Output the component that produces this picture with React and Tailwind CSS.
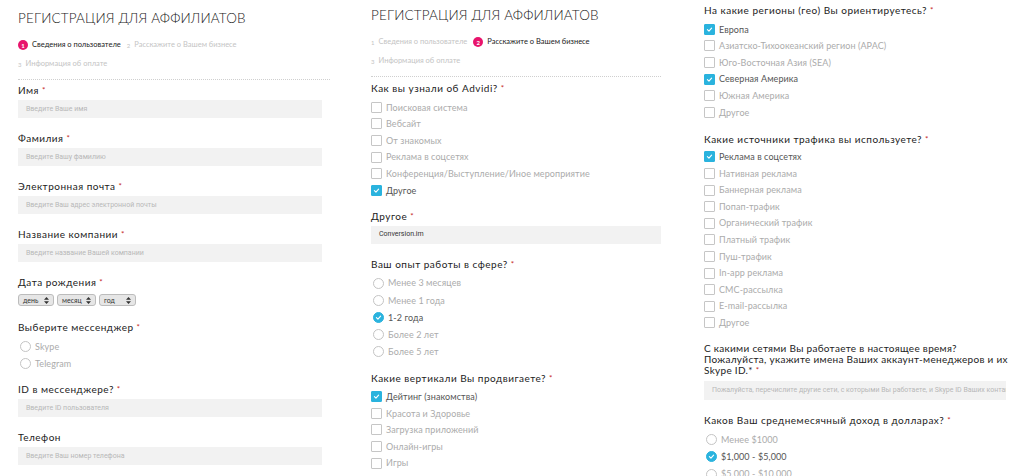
import React from 'react';

const font = { fontFamily: 'Lato, "Open Sans", sans-serif' };

const Req = () => <span className="text-[#c62828] text-[8px] align-top ml-[3px]">*</span>;

const Label = ({ children, className = '' }) => (
  <div className={`text-[10px] leading-[10px] h-[10px] whitespace-nowrap tracking-[0.05em] text-[#222] font-normal ${className}`}>
    {children}
    <Req />
  </div>
);

const Field = ({ placeholder, value, className = '' }) => (
  <div className={`h-[18px] bg-[#f2f2f2] flex items-center px-[8px] overflow-hidden whitespace-nowrap text-[7px] font-['Roboto'] ${value ? 'text-[#333]' : 'text-[#b8b8b8]'} ${className}`}>
    {value || placeholder}
  </div>
);

const Tick = () => (
  <svg width="7" height="7" viewBox="0 0 10 10" fill="none">
    <path d="M2 5.2 L4.2 7.3 L8 3" stroke="white" strokeWidth="1.6" strokeLinecap="round" strokeLinejoin="round" />
  </svg>
);

const CheckItem = ({ label, checked }) => (
  <div className="flex items-center h-[16.6px]">
    <span
      className={`w-[11px] h-[11px] rounded-[1px] border flex items-center justify-center shrink-0 ${
        checked ? 'bg-[#2ab3de] border-[#2ab3de]' : 'bg-white border-[#c6c6c6]'
      }`}
    >
      {checked && <Tick />}
    </span>
    <span className={`ml-[4px] text-[9px] tracking-[0.01em] whitespace-nowrap ${checked ? 'text-[#555]' : 'text-[#ababab]'}`}>{label}</span>
  </div>
);

const RadioItem = ({ label, checked }) => (
  <div className="flex items-center h-[17.2px] pl-[2px]">
    <span
      className={`w-[11px] h-[11px] rounded-full border flex items-center justify-center shrink-0 ${
        checked ? 'bg-[#2ab3de] border-[#2ab3de]' : 'bg-white border-[#c4c4c4]'
      }`}
    >
      {checked && <Tick />}
    </span>
    <span className={`ml-[4px] text-[9px] tracking-[0.01em] whitespace-nowrap ${checked ? 'text-[#555]' : 'text-[#ababab]'}`}>{label}</span>
  </div>
);

const Steps = ({ active }) => {
  const steps = ['Сведения о пользователе', 'Расскажите о Вашем бизнесе', 'Информация об оплате'];
  const item = (i) => {
    const on = active === i;
    return (
      <div key={i} className="flex items-center whitespace-nowrap">
        {on ? (
          <span className="w-[10px] h-[10px] rounded-full bg-[#e8146c] text-white text-[6px] font-bold flex items-center justify-center">{i + 1}</span>
        ) : (
          <span className="text-[6px] text-[#c4c4c4]">{i + 1}</span>
        )}
        <span className={`ml-[4px] text-[7.5px] ${on ? 'text-[#222]' : 'text-[#c4c4c4]'}`}>{steps[i]}</span>
      </div>
    );
  };
  return (
    <div>
      <div className="flex items-center gap-[6px] h-[14px]">
        {item(0)}
        {item(1)}
      </div>
      <div className="flex items-center h-[14px] mt-[5px]">{item(2)}</div>
    </div>
  );
};

const Title = () => (
  <h1 className="text-[13.5px] leading-[16px] tracking-[0.01em] text-[#222] font-light whitespace-nowrap">РЕГИСТРАЦИЯ ДЛЯ АФФИЛИАТОВ</h1>
);

const Arrows = () => (
  <svg width="5" height="7" viewBox="0 0 5 7" className="ml-auto">
    <path d="M2.5 0 L5 2.8 H0 Z M2.5 7 L5 4.2 H0 Z" fill="#333" />
  </svg>
);

const Select = ({ label, w }) => (
  <div className={`h-[12px] ${w} bg-[#e6e6e6] border border-[#bcbcbc] rounded-[3px] flex items-center px-[4px] text-[7px] text-[#333]`}>
    {label}
    <Arrows />
  </div>
);

export default function App() {
  return (
    <div className="w-[1020px] h-[476px] bg-white overflow-hidden flex" style={font}>
      {/* step 1 */}
      <div className="ml-[18px] w-[312px] pt-[10px]">
        <Title />
        <div className="mt-[12px]">
          <Steps active={0} />
        </div>
        <div className="border-t border-dotted border-[#cfcfcf] mt-[8px]" />
        <div className="mt-[5px] w-[304px]">
          <Label>Имя</Label>
          <Field className="mt-[5px]" placeholder="Введите Ваше имя" />
          <Label className="mt-[15px]">Фамилия</Label>
          <Field className="mt-[5px]" placeholder="Введите Вашу фамилию" />
          <Label className="mt-[15px]">Электронная почта</Label>
          <Field className="mt-[5px]" placeholder="Введите Ваш адрес электронной почты" />
          <Label className="mt-[15px]">Название компании</Label>
          <Field className="mt-[5px]" placeholder="Введите название Вашей компании" />
          <Label className="mt-[15px]">Дата рождения</Label>
          <div className="flex gap-[3px] mt-[7px]">
            <Select label="день" w="w-[36px]" />
            <Select label="месяц" w="w-[39px]" />
            <Select label="год" w="w-[37px]" />
          </div>
          <Label className="mt-[16px]">Выберите мессенджер</Label>
          <div className="mt-[6px]">
            <RadioItem label="Skype" />
            <RadioItem label="Telegram" />
          </div>
          <Label className="mt-[12px]">ID в мессенджере?</Label>
          <Field className="mt-[5px]" placeholder="Введите ID пользователя" />
          <div className="mt-[15px] text-[10px] leading-[10px] tracking-[0.05em] text-[#222]">Телефон</div>
          <Field className="mt-[5px]" placeholder="Введите Ваш номер телефона" />
        </div>
      </div>

      {/* step 2 */}
      <div className="ml-[41px] w-[290px] pt-[7px]">
        <Title />
        <div className="mt-[12px]">
          <Steps active={1} />
        </div>
        <div className="border-t border-dotted border-[#cfcfcf] mt-[8px]" />
        <div className="mt-[6px]">
          <Label>Как вы узнали об Advidi?</Label>
          <div className="mt-[6px]">
            <CheckItem label="Поисковая система" />
            <CheckItem label="Вебсайт" />
            <CheckItem label="От знакомых" />
            <CheckItem label="Реклама в соцсетях" />
            <CheckItem label="Конференция/Выступление/Иное мероприятие" />
            <CheckItem label="Другое" checked />
          </div>
          <Label className="mt-[12px]">Другое</Label>
          <Field className="mt-[5px]" value="Conversion.im" />
          <Label className="mt-[15px]">Ваш опыт работы в сфере?</Label>
          <div className="mt-[6px]">
            <RadioItem label="Менее 3 месяцев" />
            <RadioItem label="Менее 1 года" />
            <RadioItem label="1-2 года" checked />
            <RadioItem label="Более 2 лет" />
            <RadioItem label="Более 5 лет" />
          </div>
          <Label className="mt-[12px]">Какие вертикали Вы продвигаете?</Label>
          <div className="mt-[6px]">
            <CheckItem label="Дейтинг (знакомства)" checked />
            <CheckItem label="Красота и Здоровье" />
            <CheckItem label="Загрузка приложений" />
            <CheckItem label="Онлайн-игры" />
            <CheckItem label="Игры" />
          </div>
        </div>
      </div>

      {/* step 2, continued */}
      <div className="ml-[43px] w-[302px] pt-[5px]">
        <Label>На какие регионы (гео) Вы ориентируетесь?</Label>
        <div className="mt-[6px]">
          <CheckItem label="Европа" checked />
          <CheckItem label="Азиатско-Тихоокеанский регион (APAC)" />
          <CheckItem label="Юго-Восточная Азия (SEA)" />
          <CheckItem label="Северная Америка" checked />
          <CheckItem label="Южная Америка" />
          <CheckItem label="Другое" />
        </div>
        <Label className="mt-[13px]">Какие источники трафика вы используете?</Label>
        <div className="mt-[5px]">
          <CheckItem label="Реклама в соцсетях" checked />
          <CheckItem label="Нативная реклама" />
          <CheckItem label="Баннерная реклама" />
          <CheckItem label="Попап-трафик" />
          <CheckItem label="Органический трафик" />
          <CheckItem label="Платный трафик" />
          <CheckItem label="Пуш-трафик" />
          <CheckItem label="In-app реклама" />
          <CheckItem label="СМС-рассылка" />
          <CheckItem label="E-mail-рассылка" />
          <CheckItem label="Другое" />
        </div>
        <div className="mt-[12px] text-[10px] leading-[11px] tracking-[0.03em] text-[#222] whitespace-nowrap">
          С какими сетями Вы работаете в настоящее время?
          <br />
          Пожалуйста, укажите имена Ваших аккаунт-менеджеров и их
          <br />
          Skype ID.*
          <Req />
        </div>
        <Field
          className="mt-[5px] h-[19px] px-[6px]"
          placeholder="Пожалуйста, перечислите другие сети, с которыми Вы работаете, и Skype ID Ваших контактных менеджеров"
        />
        <Label className="mt-[15px]">Каков Ваш среднемесячный доход в долларах?</Label>
        <div className="mt-[6px]">
          <RadioItem label="Менее $1000" />
          <RadioItem label="$1,000 - $5,000" checked />
          <RadioItem label="$5,000 - $10,000" />
        </div>
      </div>
    </div>
  );
}
